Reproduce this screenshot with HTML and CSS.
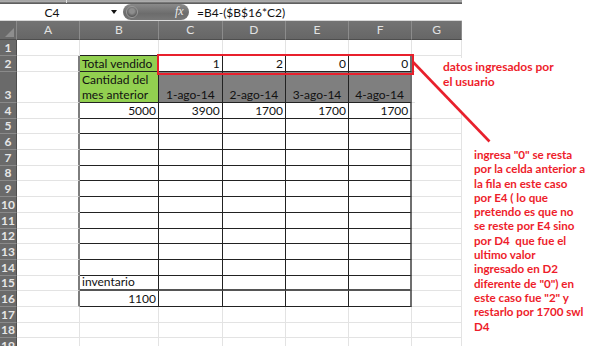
FILE: index.html
```html
<!DOCTYPE html>
<html>
<head>
<meta charset="utf-8">
<link rel="stylesheet" href="styles.css">
</head>
<body>
<div class="app">
  <div class="ribbon-strip"><span class="rs-div"></span></div>
  <div class="formula-bar">
    <div class="namebox"><span class="nb-text">C4</span><span class="nb-arrow"></span></div>
    <div class="pill"><span class="pill-knob"></span><span class="fx">fx</span></div>
    <div class="formula">=B4-($B$16*C2)</div>
  </div>
  <div class="sheet">
    <div class="corner"><span class="corner-tri"></span></div>
    <div class="ch">A</div><div class="ch">B</div><div class="ch">C</div><div class="ch">D</div><div class="ch">E</div><div class="ch">F</div><div class="ch">G</div>

    <div class="rh">1</div><div class="c"></div><div class="c tt"></div><div class="c tt"></div><div class="c tt"></div><div class="c tt"></div><div class="c tt"></div><div class="c"></div>

    <div class="rh">2</div><div class="c tl"></div><div class="c t g">Total vendido</div><div class="c t r">1</div><div class="c t r">2</div><div class="c t r">0</div><div class="c t r fr">0</div><div class="c"></div>

    <div class="rh tall">3</div><div class="c tl"></div><div class="c t g wrap">Cantidad del<br>mes anterior</div><div class="c t k ctr">1-ago-14</div><div class="c t k ctr">2-ago-14</div><div class="c t k ctr">3-ago-14</div><div class="c t k ctr fr">4-ago-14</div><div class="c"></div>

    <div class="rh">4</div><div class="c tl"></div><div class="c t r">5000</div><div class="c t r">3900</div><div class="c t r">1700</div><div class="c t r">1700</div><div class="c t r fr">1700</div><div class="c"></div>

    <div class="rh">5</div><div class="c tl"></div><div class="c t"></div><div class="c t"></div><div class="c t"></div><div class="c t"></div><div class="c t fr"></div><div class="c"></div>
    <div class="rh">6</div><div class="c tl"></div><div class="c t"></div><div class="c t"></div><div class="c t"></div><div class="c t"></div><div class="c t fr"></div><div class="c"></div>
    <div class="rh">7</div><div class="c tl"></div><div class="c t"></div><div class="c t"></div><div class="c t"></div><div class="c t"></div><div class="c t fr"></div><div class="c"></div>
    <div class="rh">8</div><div class="c tl"></div><div class="c t"></div><div class="c t"></div><div class="c t"></div><div class="c t"></div><div class="c t fr"></div><div class="c"></div>
    <div class="rh">9</div><div class="c tl"></div><div class="c t"></div><div class="c t"></div><div class="c t"></div><div class="c t"></div><div class="c t fr"></div><div class="c"></div>
    <div class="rh">10</div><div class="c tl"></div><div class="c t"></div><div class="c t"></div><div class="c t"></div><div class="c t"></div><div class="c t fr"></div><div class="c"></div>
    <div class="rh">11</div><div class="c tl"></div><div class="c t"></div><div class="c t"></div><div class="c t"></div><div class="c t"></div><div class="c t fr"></div><div class="c"></div>
    <div class="rh">12</div><div class="c tl"></div><div class="c t"></div><div class="c t"></div><div class="c t"></div><div class="c t"></div><div class="c t fr"></div><div class="c"></div>
    <div class="rh">13</div><div class="c tl"></div><div class="c t"></div><div class="c t"></div><div class="c t"></div><div class="c t"></div><div class="c t fr"></div><div class="c"></div>
    <div class="rh">14</div><div class="c tl"></div><div class="c t"></div><div class="c t"></div><div class="c t"></div><div class="c t"></div><div class="c t fr"></div><div class="c"></div>
    <div class="rh">15</div><div class="c tl"></div><div class="c t thick-b">inventario</div><div class="c t thick-b"></div><div class="c t thick-b"></div><div class="c t thick-b"></div><div class="c t thick-b fr"></div><div class="c"></div>
    <div class="rh">16</div><div class="c tl"></div><div class="c t r">1100</div><div class="c t"></div><div class="c t"></div><div class="c t"></div><div class="c t fr"></div><div class="c"></div>

    <div class="rh">17</div><div class="c"></div><div class="c"></div><div class="c"></div><div class="c"></div><div class="c"></div><div class="c"></div><div class="c"></div>
    <div class="rh">18</div><div class="c"></div><div class="c"></div><div class="c"></div><div class="c"></div><div class="c"></div><div class="c"></div><div class="c"></div>
    <div class="rh">19</div><div class="c"></div><div class="c"></div><div class="c"></div><div class="c"></div><div class="c"></div><div class="c"></div><div class="c"></div>
  </div>

  <div class="note note1">datos ingresados por<br>el usuario</div>
  <div class="note note2">ingresa "0" se resta<br>por la celda anterior a<br>la fila en este caso<br>por E4 ( lo que<br>pretendo es que no<br>se reste por E4 sino<br>por D4&nbsp; que fue el<br>ultimo valor<br>ingresado en D2<br>diferente de "0") en<br>este caso fue "2" y<br>restarlo por 1700 swl<br>D4</div>
  <div class="red-box"></div>
  <svg class="red-line" width="600" height="346" viewBox="0 0 600 346">
    <line x1="413" y1="62" x2="489.5" y2="141.5" stroke="#e8202c" stroke-width="2.6"/>
  </svg>
</div>
</body>
</html>
```
FILE: styles.css
```css
* { box-sizing: border-box; }
html, body { margin: 0; padding: 0; background: #fff; }
body { width: 600px; height: 346px; overflow: hidden; font-family: Lato, "Liberation Sans", sans-serif; }
.app { position: relative; width: 600px; height: 346px; }

.ribbon-strip {
  width: 462px; height: 4px; position: relative;
  background: linear-gradient(#8d8d8d 0, #bdbdbd 1px, #9a9a9a 2px, #555 3px, #6a6a6a 4px);
}
.rs-div { position: absolute; left: 66px; top: 0; width: 1px; height: 3px; background: #e0e0e0; }

.formula-bar { display: flex; align-items: center; height: 17px; width: 462px; background: #fff; border-bottom: 1px solid #d8d8d8; }
.namebox { width: 121px; display: flex; align-items: center; height: 100%; }
.nb-text { width: 104px; text-align: center; font-size: 12px; color: #111; }
.nb-arrow { width: 0; height: 0; border-left: 3px solid transparent; border-right: 3px solid transparent; border-top: 4px solid #111; margin-left: 7px; }
.pill {
  width: 66px; height: 16px; border-radius: 8px; position: relative;
  background: linear-gradient(#8a8a8a, #6c6c6c 60%, #777);
  margin-left: 2px;
}
.pill-knob { position: absolute; left: 3px; top: 2px; width: 12px; height: 12px; border-radius: 50%; background: radial-gradient(circle at 50% 40%, #8e8e8e 30%, #5a5a5a 70%); border: 1px solid #9b9b9b; }
.fx { position: absolute; left: 52px; top: 0px; font-family: "Liberation Serif", serif; font-style: italic; font-size: 12px; color: #ececec; line-height: 15px; }
.formula { margin-left: 8px; font-size: 12px; color: #111; }

.sheet {
  display: grid;
  grid-template-columns: 17px 63px 79px 63.7px 63.3px 63px 63.3px 49.7px;
  grid-template-rows: 19px 16px 16px 31px repeat(16, 15.7px);
  width: 462px;
}
.corner { background: #6a6a6a; border-right: 1px solid #8a8a8a; border-bottom: 1px solid #4e4e4e; position: relative; }
.corner-tri { position: absolute; right: 2px; bottom: 2px; width: 0; height: 0; border-left: 9px solid transparent; border-bottom: 9px solid #8e8e8e; }
.ch { background: linear-gradient(#737373, #666); color: #e2e2e2; font-size: 12px; text-align: center; line-height: 18px; border-right: 1px solid #8c8c8c; border-bottom: 1px solid #4e4e4e; }
.rh { background: #6a6a6a; color: #e6e6e6; font-size: 12px; font-weight: bold; text-align: center; border-bottom: 1px solid #8a8a8a; border-right: 1px solid #4e4e4e; display: flex; align-items: flex-end; justify-content: center; line-height: 15px; padding-bottom: 0px; }

.c { border-right: 1px solid #e3e3e3; border-bottom: 1px solid #e3e3e3; font-size: 12px; color: #111; padding: 0 2px; display: flex; align-items: flex-end; line-height: 15px; white-space: nowrap; }
.tt { border-bottom-color: #222; }
.tl { border-right: 2px solid #7d7d7d; }
.t { border-right-color: #222; border-bottom-color: #222; }
.fr { border-right: 2px solid #6f6f6f; }
.thick-b { border-bottom: 2px solid #555; }
.g { background: #92d050; }
.k { background: #7f7f7f; }
.r { justify-content: flex-end; }
.ctr { justify-content: center; }
.wrap { white-space: normal; line-height: 15px; align-items: flex-end; }

.red-box { position: absolute; left: 157px; top: 54px; width: 257px; height: 21px; border: 2.5px solid #e8202c; }
.red-line { position: absolute; left: 0; top: 0; pointer-events: none; }

.note { position: absolute; background: #fff; color: #ee1d2b; font-weight: bold; font-size: 12px; line-height: 14.3px; white-space: nowrap; }
.note1 { left: 415px; top: 58px; width: 160px; height: 52px; padding: 2px 0 0 28px; line-height: 14.6px; }
.note2 { left: 470px; top: 148px; width: 125px; padding-left: 4px; font-size: 11.6px; }
```
